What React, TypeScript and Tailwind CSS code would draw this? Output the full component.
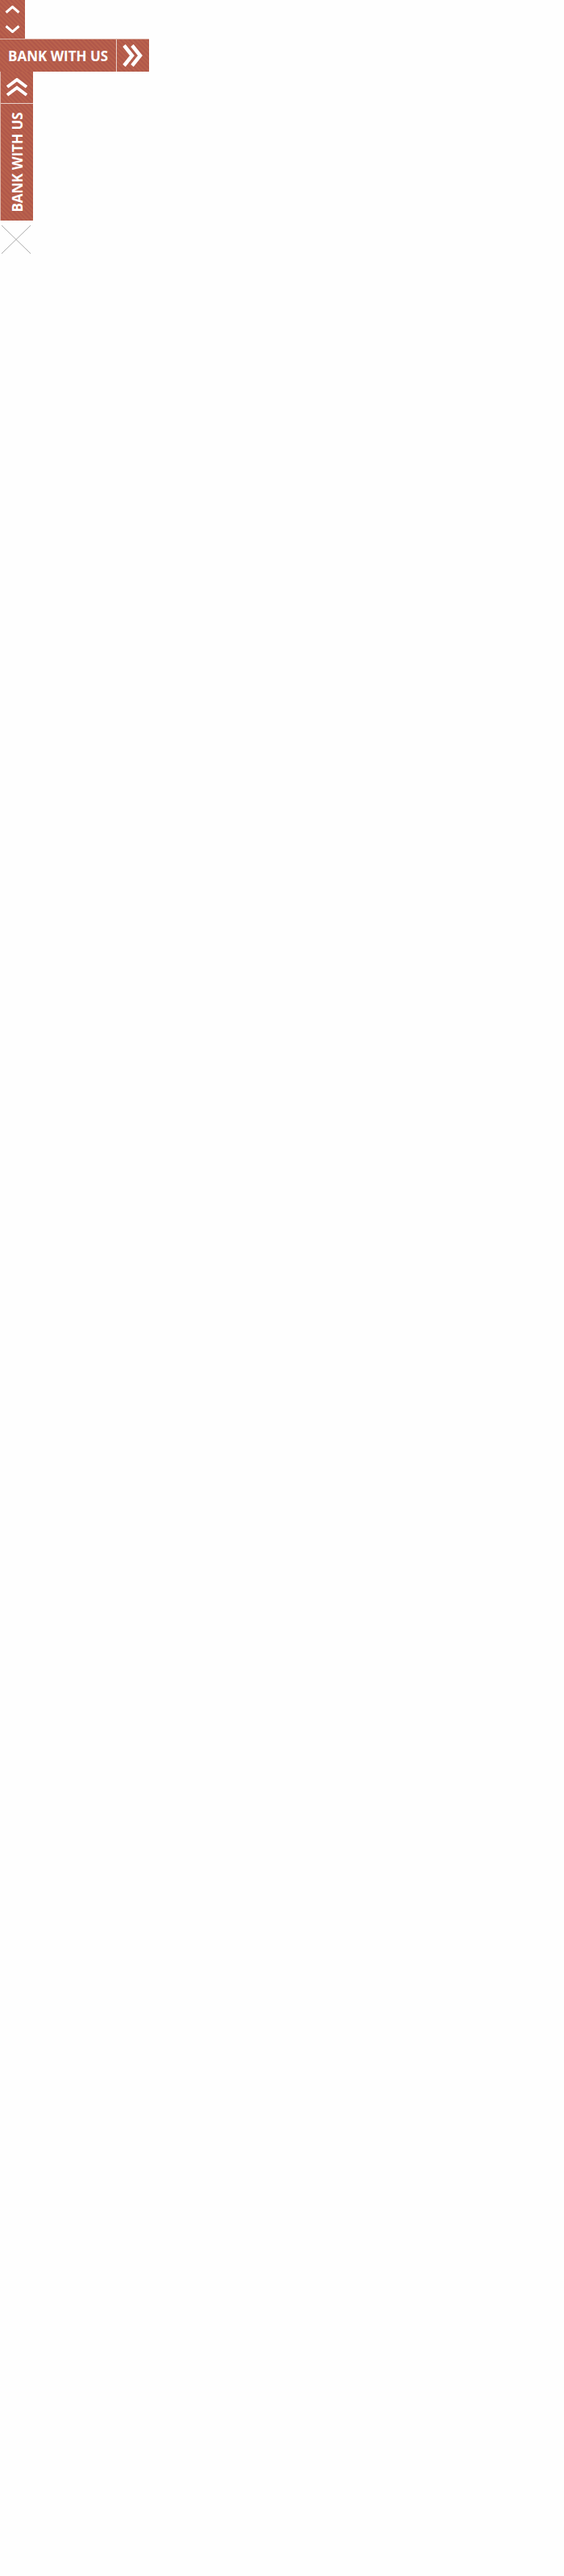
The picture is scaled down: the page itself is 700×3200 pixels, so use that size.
import React from 'react';

const stripes =
  'bg-[#b65e4a] bg-[repeating-linear-gradient(45deg,#b9614c_0px,#b9614c_2px,#b1584a_2px,#b1584a_4px)]';

export default function App() {
  return (
    <div className="min-h-[3200px] w-full bg-[#fefefe] font-['Open_Sans',sans-serif]">
      <div className="flex flex-col items-start">
        {/* Scroll up / down */}
        <div className={`flex h-[48px] w-[31px] flex-col items-center justify-between py-[7px] ${stripes}`}>
          <svg width="19" height="10" viewBox="0 0 19 10" fill="none">
            <path d="M1.5 8.5 L9.5 1.5 L17.5 8.5" stroke="white" strokeWidth="3" />
          </svg>
          <svg width="19" height="10" viewBox="0 0 19 10" fill="none">
            <path d="M1.5 1.5 L9.5 8.5 L17.5 1.5" stroke="white" strokeWidth="3" />
          </svg>
        </div>

        {/* Horizontal bank button */}
        <div className="flex h-[41px] border-t border-[#dcb3a8] bg-[#e9cfc8]">
          <div className={`flex w-[144px] items-center pl-[10px] ${stripes}`}>
            <span className="text-[17px] font-bold leading-none text-white">BANK WITH US</span>
          </div>
          <div className={`ml-[1px] flex w-[40px] items-center justify-center ${stripes}`}>
            <svg width="26" height="28" viewBox="0 0 26 28" fill="none">
              <path d="M2 1.5 L12 14 L2 26.5" stroke="white" strokeWidth="4.5" />
              <path d="M12 1.5 L22 14 L12 26.5" stroke="white" strokeWidth="4.5" />
            </svg>
          </div>
        </div>

        {/* Vertical bank button */}
        <div className="flex w-[41px] flex-col border-l border-[#dcb3a8] bg-[#e9cfc8]">
          <div className={`flex h-[39px] w-[40px] items-center justify-center ${stripes}`}>
            <svg width="28" height="24" viewBox="0 0 28 24" fill="none">
              <path d="M2 11 L14 2 L26 11" stroke="white" strokeWidth="4" />
              <path d="M2 21 L14 12 L26 21" stroke="white" strokeWidth="4" />
            </svg>
          </div>
          <div className={`mt-[1px] flex h-[145px] w-[40px] items-center justify-center ${stripes}`}>
            <span className="-rotate-90 whitespace-nowrap text-[17px] font-bold leading-none text-white">
              BANK WITH US
            </span>
          </div>
        </div>

        {/* Close */}
        <svg className="mt-[5px]" width="40" height="38" viewBox="0 0 40 38" fill="none">
          <path d="M2 1 L38 36 M38 1 L2 36" stroke="#aaaaaa" strokeWidth="1" />
        </svg>
      </div>
    </div>
  );
}
